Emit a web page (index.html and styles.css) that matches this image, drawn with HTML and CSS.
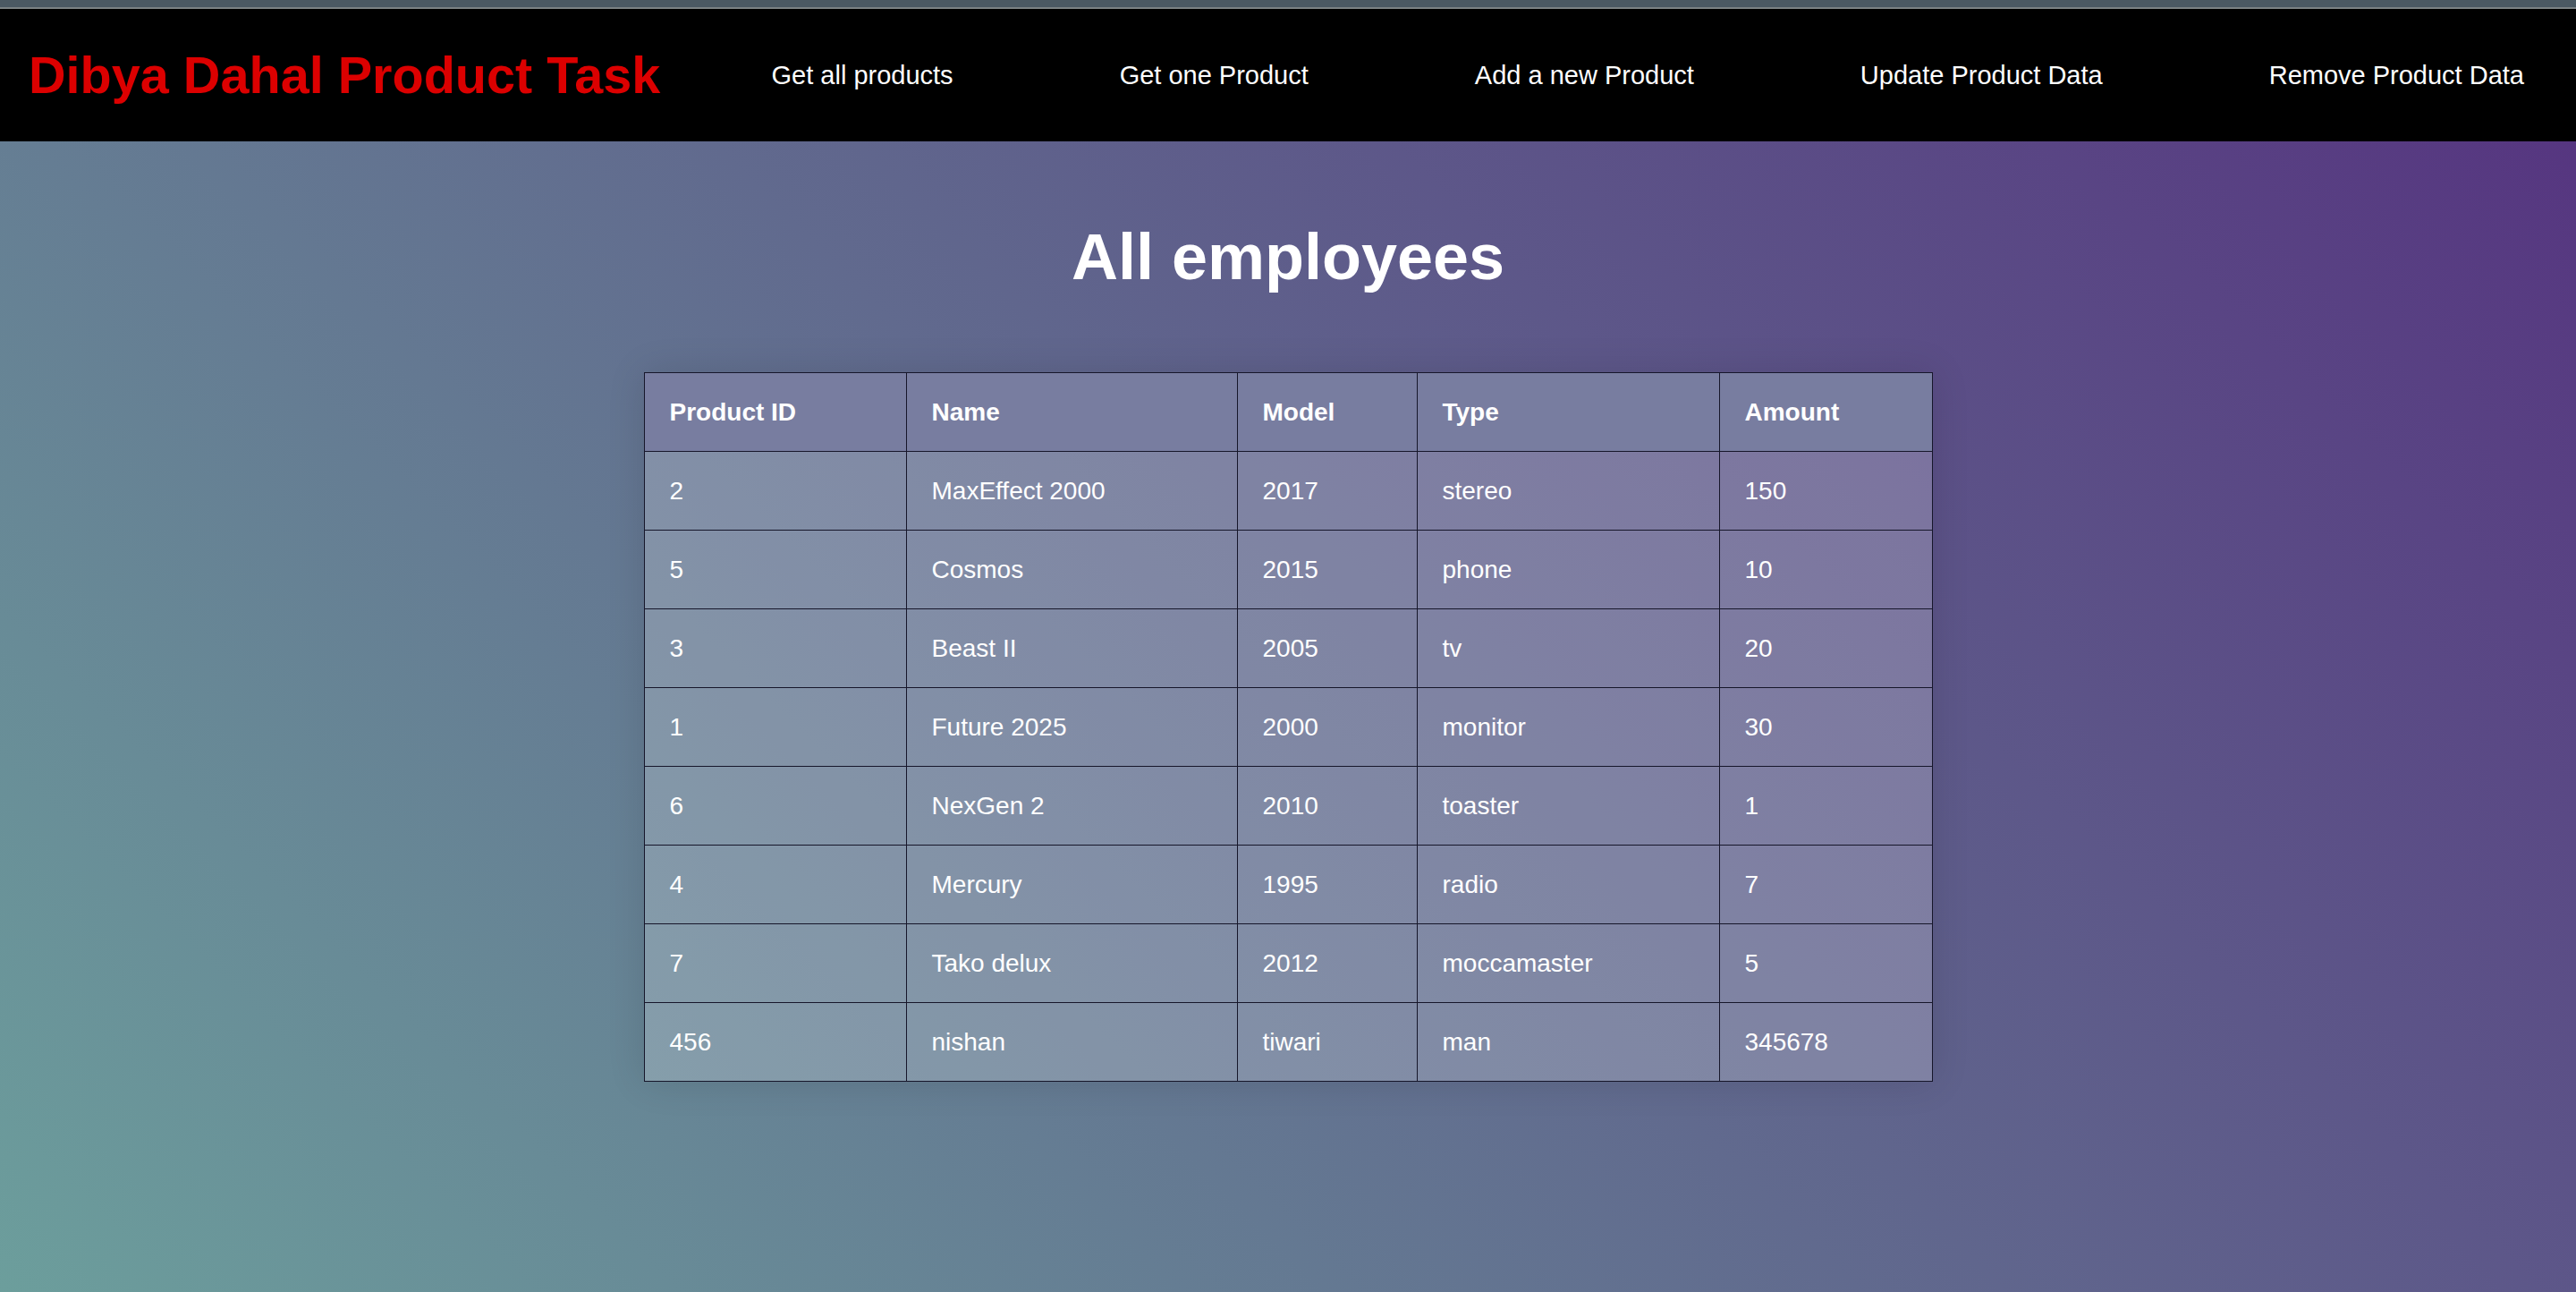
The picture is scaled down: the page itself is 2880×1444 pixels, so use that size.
FILE: index.html
```html
<!DOCTYPE html>
<html lang="en">
<head>
<meta charset="utf-8">
<title>Dibya Dahal Product Task</title>
<link rel="stylesheet" href="styles.css">
</head>
<body>
<div class="strip"></div>
<nav class="topbar">
  <h1 class="brand">Dibya Dahal Product Task</h1>
  <div class="links">
    <a href="#" class="link">Get all products</a>
    <a href="#" class="link">Get one Product</a>
    <a href="#" class="link">Add a new Product</a>
    <a href="#" class="link">Update Product Data</a>
    <a href="#" class="link">Remove Product Data</a>
  </div>
</nav>
<main class="content">
  <h2 class="heading">All employees</h2>
  <table class="products">
    <colgroup>
      <col class="c-id">
      <col class="c-name">
      <col class="c-model">
      <col class="c-type">
      <col class="c-amount">
    </colgroup>
    <thead>
      <tr><th>Product ID</th><th>Name</th><th>Model</th><th>Type</th><th>Amount</th></tr>
    </thead>
    <tbody>
      <tr><td>2</td><td>MaxEffect 2000</td><td>2017</td><td>stereo</td><td>150</td></tr>
      <tr><td>5</td><td>Cosmos</td><td>2015</td><td>phone</td><td>10</td></tr>
      <tr><td>3</td><td>Beast II</td><td>2005</td><td>tv</td><td>20</td></tr>
      <tr><td>1</td><td>Future 2025</td><td>2000</td><td>monitor</td><td>30</td></tr>
      <tr><td>6</td><td>NexGen 2</td><td>2010</td><td>toaster</td><td>1</td></tr>
      <tr><td>4</td><td>Mercury</td><td>1995</td><td>radio</td><td>7</td></tr>
      <tr><td>7</td><td>Tako delux</td><td>2012</td><td>moccamaster</td><td>5</td></tr>
      <tr><td>456</td><td>nishan</td><td>tiwari</td><td>man</td><td>345678</td></tr>
    </tbody>
  </table>
</main>
</body>
</html>
```
FILE: styles.css
```css
html {
  height: 100%;
}
body {
  margin: 0;
  min-height: 100%;
  font-family: "Liberation Sans", Arial, Helvetica, sans-serif;
  color: #fff;
  background: linear-gradient(45deg, #6c9e9c 0%, #55327f 100%);
}
.strip {
  height: 8px;
  background: #4b5963;
  border-bottom: 2px solid #7b8284;
}
.topbar {
  display: flex;
  align-items: center;
  height: 148px;
  background: #000;
  padding: 0 58px 0 32px;
}
.brand {
  margin: 0;
  font-size: 57.6px;
  font-weight: bold;
  color: #dc0000;
  white-space: nowrap;
}
.links {
  display: flex;
  gap: 186px;
  margin-left: auto;
}
.link {
  color: #fff;
  text-decoration: none;
  font-size: 29px;
  white-space: nowrap;
}
.content {
  padding: 88px 0 120px;
}
.heading {
  margin: 0 0 88px;
  text-align: center;
  font-size: 72px;
  font-weight: bold;
  line-height: normal;
}
.products {
  width: 1440px;
  margin: 0 auto;
  border-collapse: collapse;
  table-layout: fixed;
  box-shadow: 0 0 40px rgba(0, 0, 0, 0.12);
}
.c-id { width: 293px; }
.c-name { width: 370px; }
.c-model { width: 201px; }
.c-type { width: 338px; }
.c-amount { width: 238px; }
.products th,
.products td {
  border: 1px solid #16162a;
  padding: 28px 28px;
  line-height: 31px;
  font-size: 28px;
  text-align: left;
  white-space: nowrap;
}
.products th {
  font-weight: bold;
  background: #787da0;
}
.products td {
  background: rgba(255, 255, 255, 0.2);
}
```
